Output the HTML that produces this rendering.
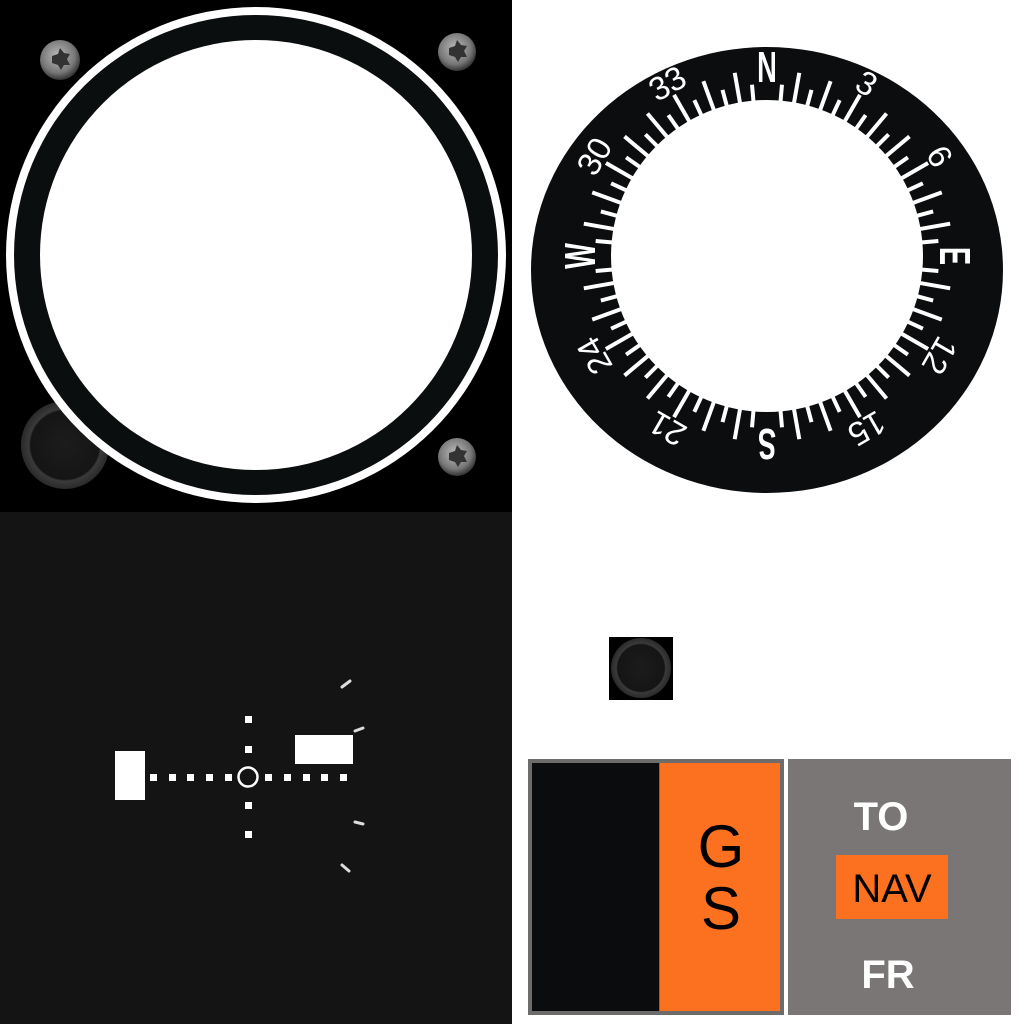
<!DOCTYPE html>
<html><head><meta charset="utf-8"><style>
html,body{margin:0;padding:0;background:#fff;width:1024px;height:1024px;overflow:hidden}
svg{display:block}
text{font-family:"Liberation Sans",sans-serif}
</style></head><body>
<svg width="1024" height="1024" viewBox="0 0 1024 1024" xmlns="http://www.w3.org/2000/svg">
<defs>
<radialGradient id="scr" cx="0.45" cy="0.4" r="0.6"><stop offset="0" stop-color="#bbb"/><stop offset="0.7" stop-color="#777"/><stop offset="1" stop-color="#333"/></radialGradient>
<radialGradient id="knob" cx="0.5" cy="0.5" r="0.5"><stop offset="0" stop-color="#1c1c1c"/><stop offset="0.78" stop-color="#151515"/><stop offset="0.82" stop-color="#3a3a3a"/><stop offset="1" stop-color="#2a2a2a"/></radialGradient>
</defs>
<rect x="0" y="0" width="512" height="512" fill="#000"/>
<circle cx="65" cy="445" r="44" fill="url(#knob)"/>
<ellipse cx="256" cy="255" rx="250" ry="248" fill="#fff"/>
<ellipse cx="256" cy="255" rx="242" ry="240" fill="#0b0e0f"/>
<ellipse cx="256" cy="255" rx="216" ry="215" fill="#fff"/>
<g>
<circle cx="60" cy="60" r="20" fill="url(#scr)"/>
<circle cx="457" cy="52" r="19" fill="url(#scr)"/>
<circle cx="457" cy="457" r="19" fill="url(#scr)"/>
<path d="M52 56 l6 -2 l2 -6 l4 5 l6 1 l-3 5 l3 6 l-6 0 l-3 5 l-3 -5 l-6 -2 z" fill="#333"/>
<path d="M449 48 l6 -2 l2 -6 l4 5 l6 1 l-3 5 l3 6 l-6 0 l-3 5 l-3 -5 l-6 -2 z" fill="#333"/>
<path d="M449 453 l6 -2 l2 -6 l4 5 l6 1 l-3 5 l3 6 l-6 0 l-3 5 l-3 -5 l-6 -2 z" fill="#333"/>
</g>
<ellipse cx="767" cy="270" rx="236" ry="223" fill="#0b0d0e"/>
<g id="ticks" stroke="#fff" stroke-width="4"></g>
<circle cx="767" cy="256" r="156" fill="#fff"/>
<g fill="#fff" font-weight="bold" font-size="44" text-anchor="middle">
<text transform="translate(767,82) scale(0.62,1)">N</text>
<text transform="translate(955,256) rotate(90) scale(0.62,1)" y="15">E</text>
<text transform="translate(767,444) rotate(180) scale(0.62,1)" y="15">S</text>
<text transform="translate(580,256) rotate(-90) scale(0.62,1)" y="15">W</text>
</g>
<g fill="#fff" font-size="33" text-anchor="middle">
<text transform="translate(767,256) rotate(30) translate(0,-188)">3</text>
<text transform="translate(767,256) rotate(60) translate(0,-188)">6</text>
<text transform="translate(767,256) rotate(120) translate(0,-188)">12</text>
<text transform="translate(767,256) rotate(150) translate(0,-188)">15</text>
<text transform="translate(767,256) rotate(210) translate(0,-188)">21</text>
<text transform="translate(767,256) rotate(240) translate(0,-188)">24</text>
<text transform="translate(767,256) rotate(300) translate(0,-188)">30</text>
<text transform="translate(767,256) rotate(330) translate(0,-188)">33</text>
</g>
<rect x="0" y="512" width="512" height="512" fill="#141414"/>
<g fill="#fff">
<rect x="115" y="751" width="30" height="49"/>
<rect x="295" y="735" width="58" height="29"/>
<rect x="150" y="774" width="7" height="7"/><rect x="169" y="774" width="7" height="7"/><rect x="187" y="774" width="7" height="7"/><rect x="206" y="774" width="7" height="7"/><rect x="225" y="774" width="7" height="7"/>
<rect x="265" y="774" width="7" height="7"/><rect x="284" y="774" width="7" height="7"/><rect x="303" y="774" width="7" height="7"/><rect x="321" y="774" width="7" height="7"/><rect x="340" y="774" width="7" height="7"/>
<rect x="245" y="716" width="7" height="7"/><rect x="245" y="746" width="7" height="7"/><rect x="245" y="802" width="7" height="7"/><rect x="245" y="831" width="7" height="7"/>
</g>
<circle cx="248" cy="777" r="9.5" fill="none" stroke="#fff" stroke-width="2.5"/>
<g stroke="#ddd" stroke-width="3" stroke-linecap="round">
<line x1="342" y1="687" x2="350" y2="681"/><line x1="355" y1="731" x2="363" y2="728"/><line x1="355" y1="822" x2="363" y2="824"/><line x1="342" y1="865" x2="349" y2="871"/>
</g>
<rect x="609" y="637" width="64" height="63" fill="#000"/>
<circle cx="641" cy="668" r="30" fill="url(#knob)"/>
<rect x="528" y="759" width="256" height="256" fill="#6e6c6b"/>
<rect x="532" y="763" width="127" height="248" fill="#0a0c0d"/>
<rect x="660" y="763" width="120" height="248" fill="#fb7120"/>
<text x="721" y="867" font-size="60" text-anchor="middle" fill="#000">G</text>
<text x="721" y="929" font-size="60" text-anchor="middle" fill="#000">S</text>
<rect x="788" y="759" width="223" height="256" fill="#7a7675"/>
<text x="881" y="830" font-size="40" font-weight="bold" text-anchor="middle" fill="#fff">TO</text>
<rect x="836" y="855" width="112" height="64" fill="#fb7120"/>
<text x="892" y="902" font-size="40" text-anchor="middle" fill="#000">NAV</text>
<text x="888" y="988" font-size="40" font-weight="bold" text-anchor="middle" fill="#fff">FR</text>
</svg>
<script>
var g=document.getElementById('ticks'),s='';
for(var a=0;a<360;a+=5){
 if(a%90==0)continue;
 var L=(a%10==0)?186:172,r=Math.PI*a/180,x=Math.sin(r),y=-Math.cos(r);
 s+='<line x1="'+(767+150*x)+'" y1="'+(256+150*y)+'" x2="'+(767+L*x)+'" y2="'+(256+L*y)+'"/>';
}
g.innerHTML=s;
</script>
</body></html>
